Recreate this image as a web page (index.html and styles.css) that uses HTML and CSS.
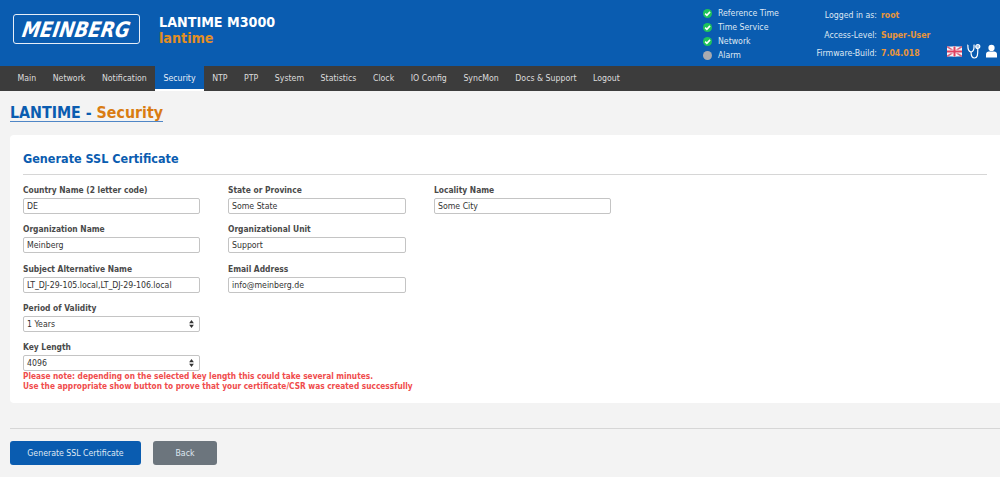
FILE: index.html
```html
<!DOCTYPE html>
<html lang="en">
<head>
  <meta charset="UTF-8">
  <title>LANTIME - Security</title>
  <link rel="stylesheet" href="styles.css">
</head>
<body>
  <header class="header">
    <div class="logo"><span>MEINBERG</span></div>
    <div class="device">
      <div class="device-name">LANTIME M3000</div>
      <div class="device-host">lantime</div>
    </div>
    <ul class="status">
      <li><span class="dot ok"><svg viewBox="0 0 10 10"><path d="M2.4 5.2 4.3 7 7.8 3.2" fill="none" stroke="#fff" stroke-width="1.7"/></svg></span>Reference Time</li>
      <li><span class="dot ok"><svg viewBox="0 0 10 10"><path d="M2.4 5.2 4.3 7 7.8 3.2" fill="none" stroke="#fff" stroke-width="1.7"/></svg></span>Time Service</li>
      <li><span class="dot ok"><svg viewBox="0 0 10 10"><path d="M2.4 5.2 4.3 7 7.8 3.2" fill="none" stroke="#fff" stroke-width="1.7"/></svg></span>Network</li>
      <li><span class="dot"></span>Alarm</li>
    </ul>
    <div class="login">
      <div class="login-row login-first"><span class="login-label">Logged in as:</span><b>root</b></div>
      <div class="login-row login-second"><span class="login-label">Access-Level:</span><b>Super-User</b></div>
      <div class="login-row"><span class="login-label">Firmware-Build:</span><b>7.04.018</b></div>
    </div>
    <div class="tools">
      <svg class="flag" viewBox="0 0 60 40">
        <rect width="60" height="40" fill="#f4f4f8"/>
        <path d="M0 0 60 40M60 0 0 40" stroke="#d8607c" stroke-width="6"/>
        <path d="M30 0V40M0 20H60" stroke="#f4f4f8" stroke-width="14"/>
        <path d="M30 0V40M0 20H60" stroke="#e0405f" stroke-width="8"/>
      </svg>
      <svg class="scope" viewBox="0 0 14 16" fill="none" stroke="#fff" stroke-width="1.2">
        <path d="M1 2H.9C.7 6 1.5 8.500 4 9 6.500 8.500 7.300 6 7 2H6.600"/>
        <path d="M4 9C4 13 5 15 7.500 15 10.500 15 10.800 12 10.800 6"/>
        <circle cx="10.800" cy="3.500" r="2" fill="#a9c4e4"/>
      </svg>
      <svg class="user" viewBox="0 0 12 14" fill="#fff">
        <circle cx="6" cy="3.600" r="3.400"/>
        <path d="M0 14V10.500C0 8.500 1.500 7.500 3 7.500H9C10.500 7.500 12 8.500 12 10.500V14Z"/>
      </svg>
    </div>
  </header>

  <nav class="nav">
    <a>Main</a>
    <a>Network</a>
    <a>Notification</a>
    <a class="active">Security</a>
    <a>NTP</a>
    <a>PTP</a>
    <a>System</a>
    <a>Statistics</a>
    <a>Clock</a>
    <a>IO Config</a>
    <a>SyncMon</a>
    <a>Docs &amp; Support</a>
    <a>Logout</a>
  </nav>

  <main class="content">
    <h1 class="page-title">LANTIME - <span>Security</span></h1>

    <section class="card">
      <h2>Generate SSL Certificate</h2>
      <div class="form-grid">
        <div class="field"><label>Country Name (2 letter code)</label><input value="DE"></div>
        <div class="field"><label>State or Province</label><input value="Some State"></div>
        <div class="field"><label>Locality Name</label><input value="Some City"></div>

        <div class="field"><label>Organization Name</label><input value="Meinberg"></div>
        <div class="field"><label>Organizational Unit</label><input value="Support"></div>
        <div></div>

        <div class="field"><label>Subject Alternative Name</label><input value="LT_DJ-29-105.local,LT_DJ-29-106.local"></div>
        <div class="field"><label>Email Address</label><input value="info@meinberg.de"></div>
        <div></div>

        <div class="field"><label>Period of Validity</label><div class="select">1 Years<svg viewBox="0 0 6 10" fill="#333"><path d="M3 0 6 4H0ZM3 10 0 6H6Z"/></svg></div></div>
        <div></div>
        <div></div>

        <div class="field"><label>Key Length</label><div class="select">4096<svg viewBox="0 0 6 10" fill="#333"><path d="M3 0 6 4H0ZM3 10 0 6H6Z"/></svg></div></div>
      </div>
      <p class="note">Please note: depending on the selected key length this could take several minutes.<br>Use the appropriate show button to prove that your certificate/CSR was created successfully</p>
    </section>

    <div class="actions">
      <button class="btn btn-primary">Generate SSL Certificate</button>
      <button class="btn btn-back">Back</button>
    </div>
  </main>
</body>
</html>
```

FILE: styles.css
```css
body {
  margin: 0;
  background: #f3f3f3;
  font-family: "DejaVu Sans Condensed", "DejaVu Sans", Verdana, sans-serif;
  font-stretch: condensed;
  font-size: 8.7px;
  color: #333;
  height: 477px;
  overflow: hidden;
}

.header {
  display: flex;
  height: 66px;
  background: #0a5cb0;
  color: #dfe8f3;
}

.logo {
  display: flex;
  align-items: center;
  justify-content: center;
  box-sizing: border-box;
  width: 127px;
  height: 30px;
  margin: 14px 0 0 13px;
  border: 1px solid #e6eef8;
  border-radius: 3px;
}

.logo span {
  color: #fff;
  font-size: 18.500px;
  font-weight: bold;
  font-style: italic;
  transform: scale(1.09, 1.15) skewX(-10deg);
}

.device {
  margin: 14px 0 0 19px;
  width: 544px;
  font-weight: bold;
  line-height: 16px;
}

.device-name {
  font-size: 14.200px;
  color: #fff;
}

.device-host {
  font-size: 14.200px;
  color: #e38e24;
}

.status {
  list-style: none;
  margin: 6px 0 0 0;
  padding: 0;
  width: 109px;
}

.status li {
  display: flex;
  align-items: center;
  height: 14px;
}

.dot {
  width: 9px;
  height: 9px;
  margin-right: 6px;
  border-radius: 50%;
  background: #a9abb0;
  display: flex;
}

.dot.ok {
  background: #1fc45a;
}

.login {
  width: 123px;
  padding-top: 8px;
}

.login-row {
  display: flex;
  height: 14px;
  line-height: 14px;
}

.login-first {
  margin-bottom: 6px;
}

.login-second {
  margin-bottom: 4px;
}

.login-label {
  width: 65px;
  text-align: right;
  margin-right: 4px;
  white-space: nowrap;
  flex-shrink: 0;
}

.login-row b {
  color: #e8963a;
  white-space: nowrap;
}

.tools {
  display: flex;
  align-items: center;
  gap: 5px;
  margin: 42px 0 0 12px;
  height: 18px;
}

.flag {
  width: 15px;
  height: 11px;
}

.scope {
  width: 14px;
  height: 16px;
}

.user {
  width: 11px;
  height: 14px;
}

.nav {
  display: flex;
  height: 25px;
  padding-left: 9.200px;
  background: #3c3c3c;
}

.nav a {
  padding: 0 8.300px;
  line-height: 25px;
  color: #dcdcdc;
  white-space: nowrap;
}

.nav a.active {
  box-sizing: border-box;
  height: 25px;
  background: #0a5cb0;
  color: #e6eef8;
  border-bottom: 2px solid #fff;
}

.content {
  padding: 0 0 0 10px;
}

.page-title {
  display: inline-block;
  margin: 14px 0 13px;
  font-size: 15.800px;
  line-height: 16px;
  color: #0a5cb0;
  border-bottom: 1px solid #4f86c6;
}

.page-title span {
  color: #d97c12;
}

.card {
  box-sizing: border-box;
  height: 268px;
  padding: 16px 13px 0;
  background: #fff;
  border-radius: 4px 0 0 4px;
}

.card h2 {
  margin: 0 0 8px;
  padding-bottom: 8px;
  font-size: 12.500px;
  line-height: 15px;
  color: #0a5cb0;
  border-bottom: 1px solid #d6d6d6;
}

.form-grid {
  display: grid;
  grid-template-columns: 177px 178px 177px;
  column-gap: 28px;
  row-gap: 8.250px;
}

.field label {
  display: block;
  font-size: 8.400px;
  font-weight: bold;
  color: #4a4a4a;
  line-height: 15px;
  height: 15px;
}

.field input,
.select {
  display: flex;
  align-items: center;
  justify-content: space-between;
  box-sizing: border-box;
  width: 100%;
  height: 16px;
  padding: 0 3px;
  font-family: inherit;
  font-stretch: condensed;
  font-size: 8.700px;
  color: #333;
  background: #fff;
  border: 1px solid #c4c4c4;
  border-radius: 2px;
}

.select svg {
  width: 5px;
  height: 8px;
  margin-right: 2px;
}

.note {
  margin: 1px 0 0;
  font-size: 8.250px;
  font-weight: bold;
  line-height: 9.600px;
  color: #f04c4c;
}

.actions {
  margin: 25px 0 0;
  padding-top: 12px;
  border-top: 1px solid #d6d6d6;
  display: flex;
  gap: 12px;
}

.btn {
  height: 24px;
  padding: 0;
  font-family: inherit;
  font-stretch: condensed;
  font-size: 8.700px;
  color: #dfe8f3;
  border: none;
  border-radius: 3px;
}

.btn-primary {
  width: 131px;
  background: #0a5cb0;
}

.btn-back {
  width: 64px;
  background: #6c757d;
}
```
